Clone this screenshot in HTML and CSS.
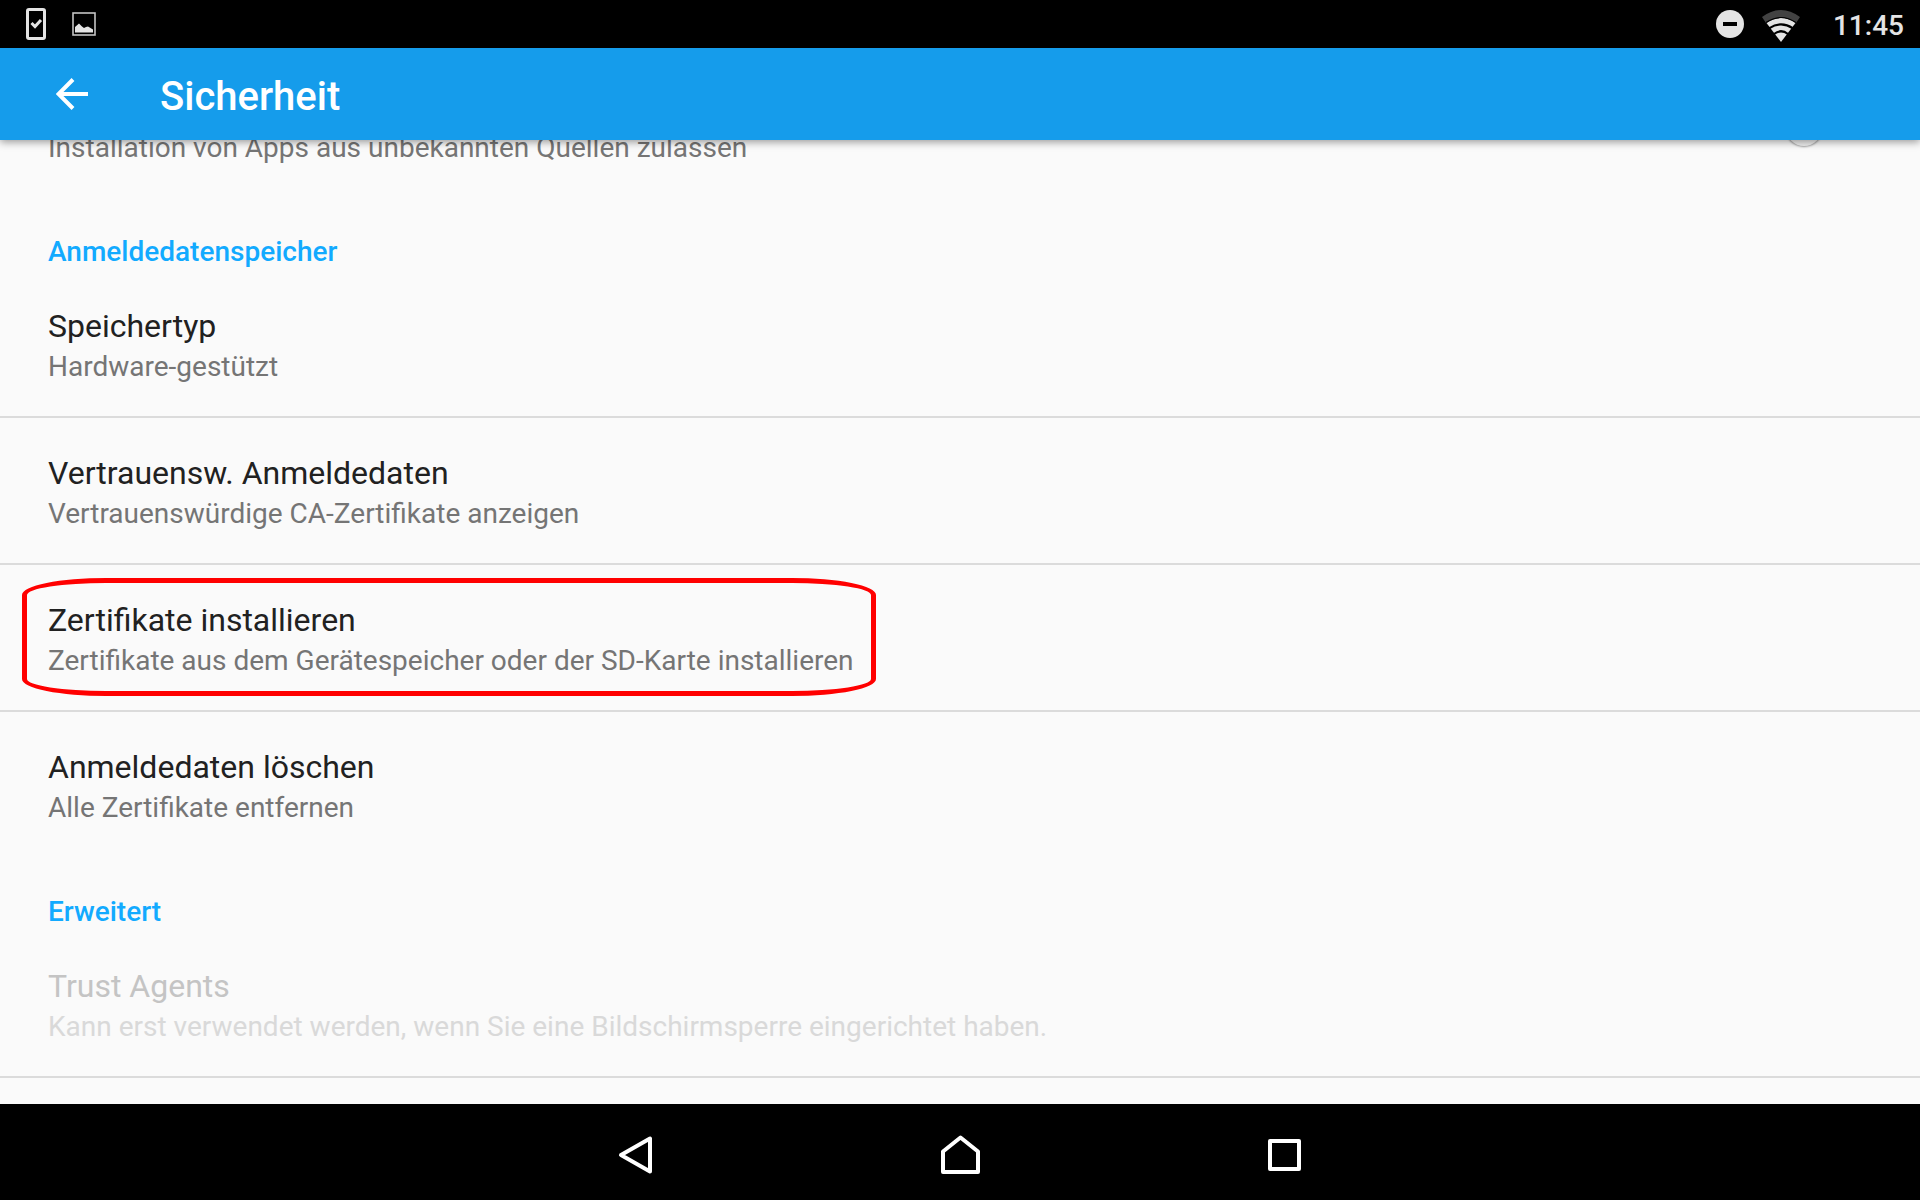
FILE: index.html
```html
<!DOCTYPE html>
<html lang="de">
<head>
<meta charset="utf-8">
<meta name="viewport" content="width=device-width, initial-scale=1">
<title>Sicherheit</title>
<link rel="stylesheet" href="styles.css">
</head>
<body>
<div class="status-bar">
  <div class="status-group notifications">
    <svg width="20" height="32" viewBox="0 0 20 32" aria-hidden="true">
      <rect x="1.5" y="1.5" width="17" height="29" rx="1.5" fill="none" stroke="#e4e4e4" stroke-width="3"/>
      <path d="M5.500 15 9 18.500 15 12" fill="none" stroke="#e4e4e4" stroke-width="3"/>
    </svg>
    <svg width="24" height="24" viewBox="0 0 24 24" aria-hidden="true">
      <rect x="1" y="1" width="22" height="22" fill="none" stroke="#c4c4c4" stroke-width="1.600"/>
      <path d="M3 20.500V15L7 11.500 10 14.500 12 16 14 15 16 14.500 18.500 16 21 17.500V20.500Z" fill="#e4e4e4"/>
    </svg>
  </div>
  <div class="status-group system">
    <svg width="28" height="28" viewBox="0 0 28 28" aria-hidden="true">
      <circle cx="14" cy="14" r="14" fill="#e4e4e4"/>
      <rect x="7" y="12" width="14" height="4" fill="#000"/>
    </svg>
    <svg class="wifi" width="40" height="32" viewBox="0 0 40 32" aria-hidden="true">
      <path d="M1 7Q20 -7 39 7L35 13Q20 2 5 13Z" fill="#424242"/>
      <path d="M5.500 13Q20 3 34.500 13L20 32Z" fill="#e4e4e4"/>
      <path d="M8 18.300Q20 10.500 32 18.300M13 24Q20 18.500 27 24" fill="none" stroke="#000" stroke-width="2.200"/>
      <path d="M5 12.500Q20 2.500 35 12.500" fill="none" stroke="#000" stroke-width="1.200"/>
    </svg>
    <time class="clock">11:45</time>
  </div>
</div>
<header class="app-bar">
  <button class="up" type="button" aria-label="Zurück">
    <svg width="32" height="32" viewBox="0 0 32 32" aria-hidden="true">
      <path d="M32 16H3M17 1.500 2.500 16 17 30.500" fill="none" stroke="#fff" stroke-width="4"/>
    </svg>
  </button>
  <h1 class="app-title">Sicherheit</h1>
</header>
<main class="viewport">
  <div class="list">
    <label class="row scrolled">
      <span class="texts"><span class="summary">Installation von Apps aus unbekannten Quellen zulassen</span></span>
      <input class="switch" type="checkbox" role="switch">
    </label>
    <h2 class="category">Anmeldedatenspeicher</h2>
    <button class="row divided" type="button">
      <span class="texts"><span class="title">Speichertyp</span><span class="summary">Hardware-gestützt</span></span>
    </button>
    <button class="row divided" type="button">
      <span class="texts"><span class="title">Vertrauensw. Anmeldedaten</span><span class="summary">Vertrauenswürdige CA-Zertifikate anzeigen</span></span>
    </button>
    <button class="row divided" type="button">
      <span class="texts marked"><span class="title">Zertifikate installieren</span><span class="summary">Zertifikate aus dem Gerätespeicher oder der SD-Karte installieren</span></span>
    </button>
    <button class="row" type="button">
      <span class="texts"><span class="title">Anmeldedaten löschen</span><span class="summary">Alle Zertifikate entfernen</span></span>
    </button>
    <h2 class="category">Erweitert</h2>
    <button class="row divided" type="button" disabled>
      <span class="texts"><span class="title">Trust Agents</span><span class="summary">Kann erst verwendet werden, wenn Sie eine Bildschirmsperre eingerichtet haben.</span></span>
    </button>
  </div>
</main>
<nav class="nav-bar" aria-label="Systemnavigation">
  <button class="nav-button" type="button" aria-label="Zurück">
    <svg width="40" height="40" viewBox="0 0 40 40" aria-hidden="true"><path d="M34 3.500V36.500L5 20Z" fill="none" stroke="#fff" stroke-width="4" stroke-linejoin="round"/></svg>
  </button>
  <button class="nav-button" type="button" aria-label="Startseite">
    <svg width="40" height="40" viewBox="0 0 40 40" aria-hidden="true"><path d="M3 37V16.500L20.500 2.500 38 16.500V37Z" fill="none" stroke="#fff" stroke-width="4" stroke-linejoin="round"/></svg>
  </button>
  <button class="nav-button" type="button" aria-label="Übersicht">
    <svg width="40" height="40" viewBox="0 0 40 40" aria-hidden="true"><rect x="6" y="6" width="29" height="28" fill="none" stroke="#fff" stroke-width="4" stroke-linejoin="round"/></svg>
  </button>
</nav>
</body>
</html>
```
FILE: styles.css
```css
* { box-sizing: border-box; }

body {
  margin: 0;
  height: 100vh;
  display: flex;
  flex-direction: column;
  overflow: hidden;
  background: #fafafa;
  color: #212121;
  font-family: Roboto, sans-serif;
}

button {
  border: 0;
  padding: 0;
  background: none;
  color: inherit;
  font: inherit;
}

svg { display: block; flex: none; }

.status-bar {
  flex: none;
  display: flex;
  justify-content: space-between;
  height: 48px;
  padding: 0 16px 0 26px;
  background: #000;
  color: #e4e4e4;
}

.status-group { display: flex; align-items: center; }
.notifications { gap: 26px; }
.system { gap: 17px; }
.wifi { margin-top: 4px; }

.clock {
  margin-left: 15px;
  padding-top: 4px;
  font-size: 28px;
  font-weight: 500;
  line-height: 32px;
}

.app-bar {
  position: relative;
  z-index: 1;
  flex: none;
  display: flex;
  align-items: center;
  gap: 72px;
  height: 92px;
  padding: 0 56px;
  background: #159ceb;
  color: #fff;
  box-shadow: 0 2px 8px rgba(0, 0, 0, 0.4);
}

.app-title {
  margin: 0;
  padding-top: 6px;
  font-size: 40px;
  font-weight: 500;
  line-height: 48px;
}

.viewport {
  flex: 1;
  min-height: 0;
  overflow: hidden;
}

/* The list is scrolled so that its first row is partly under the app bar. */
.list { margin-top: -88px; }

.row {
  display: flex;
  align-items: center;
  justify-content: space-between;
  width: 100%;
  padding: 35px 48px 28px;
  text-align: left;
}

.divided { border-bottom: 2px solid #dbdbdb; }

.texts { display: flex; flex-direction: column; }

.scrolled .texts {
  height: 82px;
  justify-content: flex-end;
}

.title {
  font-size: 32px;
  line-height: 40px;
}

.summary {
  color: #757575;
  font-size: 28px;
  line-height: 42px;
}

.row:disabled .title { color: #c4c4c4; }
.row:disabled .summary { color: #d9d9d9; }

.category {
  margin: 0;
  padding: 36px 48px 0;
  color: #12aaff;
  font-size: 28px;
  font-weight: 500;
  line-height: 38px;
}

.marked { position: relative; }

.marked::after {
  content: "";
  position: absolute;
  inset: -22px -22px -14px -26px;
  border: 5px solid #f00;
  border-radius: 84px / 17px;
}

.switch {
  appearance: none;
  width: 86px;
  height: 36px;
  margin: 0;
}

.switch::before {
  content: "";
  display: block;
  width: 36px;
  height: 36px;
  border-radius: 50%;
  background: #f1f1f1;
  box-shadow: 0 0 2px 1px rgba(0, 0, 0, 0.35);
}

.nav-bar {
  flex: none;
  display: flex;
  justify-content: center;
  height: 96px;
  padding-top: 6px;
  background: #000;
}

.nav-button {
  display: grid;
  place-items: center;
  width: 324px;
}
```
